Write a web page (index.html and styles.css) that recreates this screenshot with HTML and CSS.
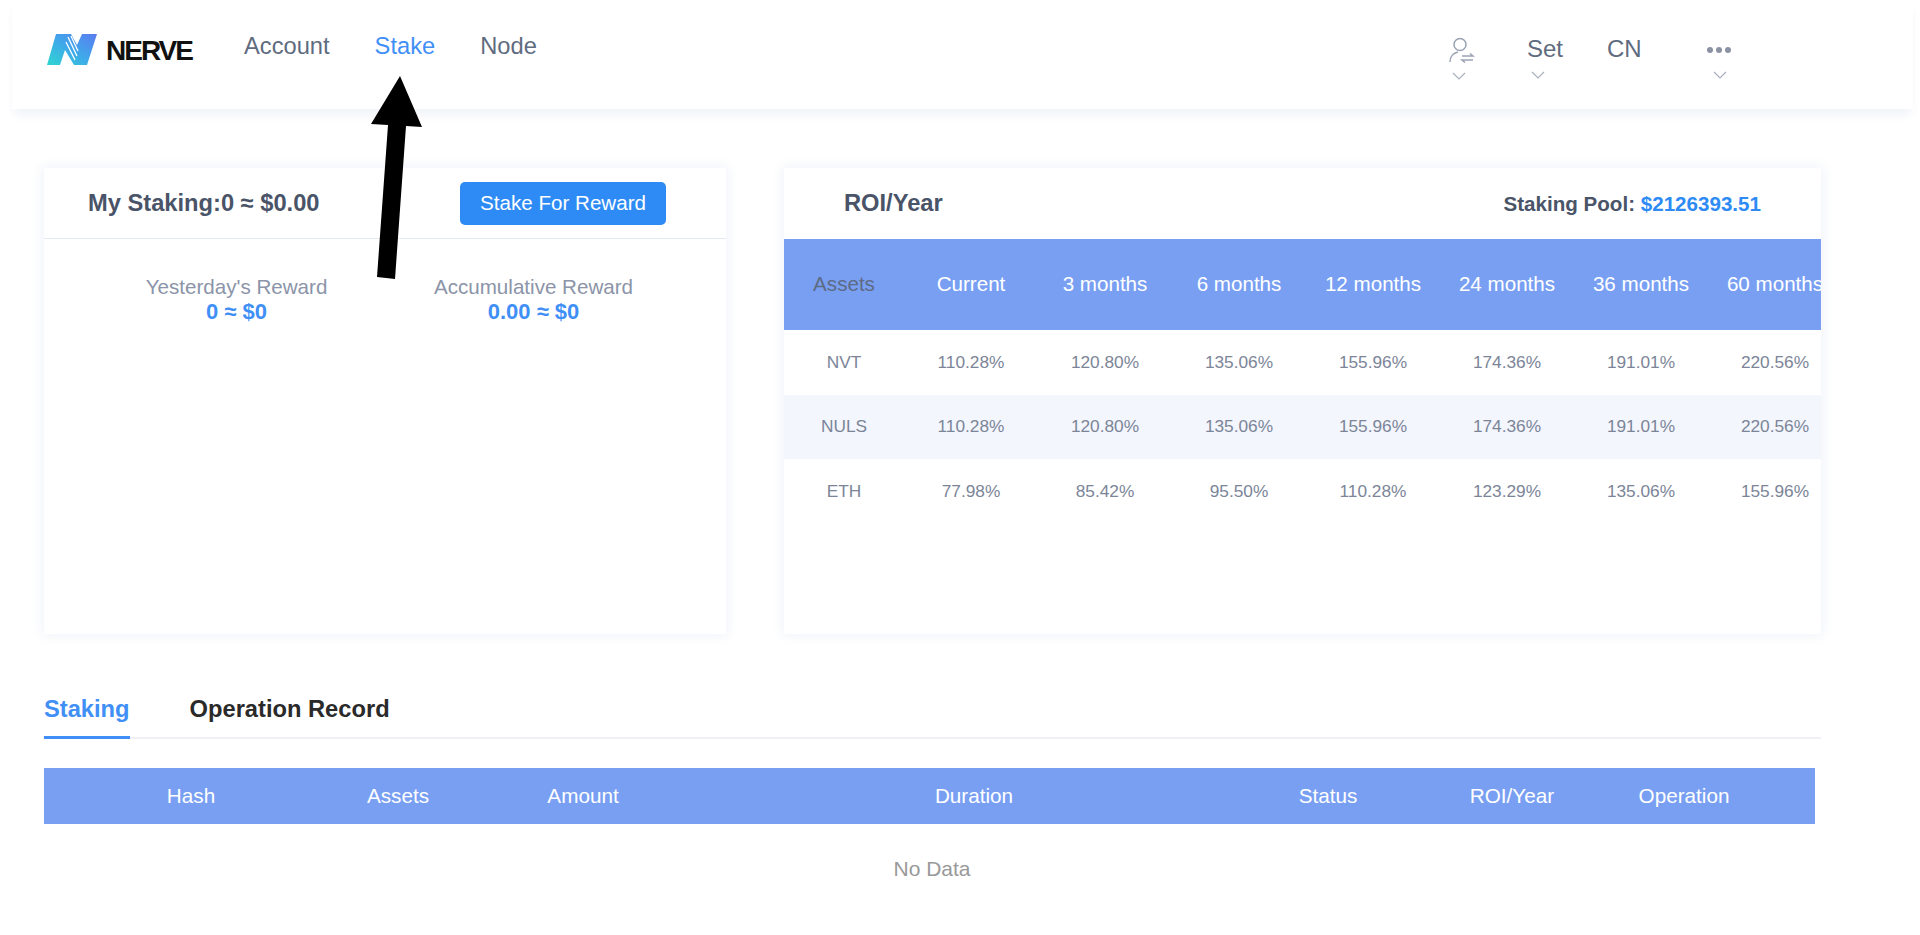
FILE: index.html
```html
<!DOCTYPE html>
<html lang="en">
<head>
    <meta charset="utf-8">
    <meta name="viewport" content="width=device-width, initial-scale=1.0">
    <title>Nerve Stake</title>
    <link rel="stylesheet" href="styles.css">
</head>
<body>
    <div id="page">
        <header class="topbar">
            <a class="logo">
                <svg class="logo-mark" viewBox="0 0 50 31" width="50" height="31">
                    <defs>
                        <linearGradient id="logoGrad" x1="0" y1="1" x2="1" y2="0">
                            <stop offset="0" stop-color="#2fd6d0"/>
                            <stop offset="0.5" stop-color="#3fa8ea"/>
                            <stop offset="1" stop-color="#5b7cf0"/>
                        </linearGradient>
                    </defs>
                    <polygon points="9,0 24,0 30,11 35,0 50,0 40,31 27,31 18,16 13,31 0,31" fill="url(#logoGrad)"/>
                    <path d="M24 2l7 15M21 3l9 19M19 8l9 18" stroke="#fff" stroke-width="1.3" fill="none"/>
                </svg>
                <span class="logo-text">NERVE</span>
            </a>
            <nav class="nav">
                <a>Account</a>
                <a class="active">Stake</a>
                <a>Node</a>
            </nav>
            <div class="tools">
                <div class="tool tool-user">
                    <svg class="user-icon" viewBox="0 0 26 26" width="26" height="26" fill="none" stroke="#9aa3b4" stroke-width="1.5">
                        <circle cx="11" cy="7.5" r="6"/>
                        <path d="M1 25c0-5 3-9 8-10"/>
                        <path d="M13 19h11l-3-2.5M24 23H13l3 2.5"/>
                    </svg>
                    <svg class="chev" viewBox="0 0 14 8" width="14" height="8"><path d="M1 1l6 6 6-6"/></svg>
                </div>
                <div class="tool tool-set">
                    <span>Set</span>
                    <svg class="chev" viewBox="0 0 14 8" width="14" height="8"><path d="M1 1l6 6 6-6"/></svg>
                </div>
                <div class="tool tool-lang"><span>CN</span></div>
                <div class="tool tool-more">
                    <span class="dots"><i></i><i></i><i></i></span>
                    <svg class="chev" viewBox="0 0 14 8" width="14" height="8"><path d="M1 1l6 6 6-6"/></svg>
                </div>
            </div>
        </header>

        <main class="content">
            <div class="cards">
                <section class="card card-mine">
                    <div class="card-head">
                        <h2>My Staking:0 ≈ $0.00</h2>
                        <button class="btn">Stake For Reward</button>
                    </div>
                    <div class="stats">
                        <div class="stat">
                            <p>Yesterday's Reward</p>
                            <b>0 ≈ $0</b>
                        </div>
                        <div class="stat">
                            <p>Accumulative Reward</p>
                            <b>0.00 ≈ $0</b>
                        </div>
                    </div>
                </section>

                <section class="card card-roi">
                    <div class="card-head roi-head">
                        <h2>ROI/Year</h2>
                        <div class="pool">Staking Pool: <b>$2126393.51</b></div>
                    </div>
                    <div class="roi-row roi-title">
                        <span class="dark">Assets</span><span>Current</span><span>3 months</span><span>6 months</span><span>12 months</span><span>24 months</span><span>36 months</span><span>60 months</span>
                    </div>
                    <div class="roi-row">
                        <span>NVT</span><span>110.28%</span><span>120.80%</span><span>135.06%</span><span>155.96%</span><span>174.36%</span><span>191.01%</span><span>220.56%</span>
                    </div>
                    <div class="roi-row striped">
                        <span>NULS</span><span>110.28%</span><span>120.80%</span><span>135.06%</span><span>155.96%</span><span>174.36%</span><span>191.01%</span><span>220.56%</span>
                    </div>
                    <div class="roi-row">
                        <span>ETH</span><span>77.98%</span><span>85.42%</span><span>95.50%</span><span>110.28%</span><span>123.29%</span><span>135.06%</span><span>155.96%</span>
                    </div>
                </section>
            </div>

            <div class="tabs">
                <a class="tab active">Staking</a>
                <a class="tab">Operation Record</a>
            </div>

            <div class="list-head">
                <span>Hash</span><span>Assets</span><span>Amount</span><span>Duration</span><span>Status</span><span>ROI/Year</span><span>Operation</span>
            </div>
            <div class="no-data">No Data</div>
        </main>

        <svg class="arrow" viewBox="0 0 60 210" width="60" height="210">
            <polygon points="32,1 54,52 38,51 27,204 9,202 20,50 3,49"/>
        </svg>
    </div>
</body>
</html>
```

FILE: styles.css
```css
* {
    box-sizing: border-box;
}
html, body {
    margin: 0;
    height: 100%;
    overflow: hidden;
}
body {
    font-family: "Liberation Sans", Arial, sans-serif;
    color: #5b6679;
    background: #fff;
}
#page {
    position: relative;
    height: 935px;
}
h2, p {
    margin: 0;
}

/* top bar */
.topbar {
    display: flex;
    height: 109px;
    margin: 0 7px 0 12px;
    padding: 0 0 0 35px;
    background: #fff;
    box-shadow: 0 8px 10px -2px #f1f3f9;
}
.logo {
    display: flex;
    align-items: flex-start;
    padding-top: 34px;
    width: 197px;
}
.logo-text {
    margin: 1px 0 0 9px;
    font-size: 28px;
    font-weight: bold;
    letter-spacing: -2px;
    color: #111;
}
.nav {
    display: flex;
    gap: 45px;
    padding-top: 32px;
    font-size: 23.7px;
    line-height: 28px;
    color: #5f6b7f;
}
.nav .active {
    color: #3f8ff7;
}
.tools {
    position: relative;
    display: flex;
    margin-left: auto;
    margin-right: 182px;
    padding-top: 35px;
    font-size: 24px;
    line-height: 27px;
    color: #5f6b7f;
}
.tool {
    display: flex;
    flex-direction: column;
    align-items: flex-start;
}
.tool-user {
    width: 78px;
    padding-top: 2px;
}
.tool-set {
    width: 80px;
}
.tool-lang {
    width: 100px;
}
.chev {
    fill: none;
    stroke: #a9b0bd;
    stroke-width: 1.2;
}
.tool-user .chev {
    margin: 9px 0 0 3px;
}
.tool-set .chev {
    margin: 9px 0 0 4px;
}
.tool-more .chev {
    margin: 21px 0 0 6px;
}
.dots {
    display: flex;
    gap: 3px;
    padding-top: 12px;
    height: 15px;
}
.dots i {
    width: 6px;
    height: 6px;
    border-radius: 50%;
    background: #8a92a3;
}

/* cards */
.content {
    padding: 59px 99px 0 44px;
}
.cards {
    display: flex;
    gap: 58px;
    height: 466px;
}
.card {
    background: #fff;
    box-shadow: 0 0 12px 2px #f1f3f9;
    overflow: hidden;
}
.card-mine {
    width: 682px;
}
.card-roi {
    width: 1037px;
}
.card-head {
    display: flex;
    align-items: center;
    justify-content: space-between;
    height: 71px;
    padding: 0 60px 0 44px;
    border-bottom: 1px solid #e6ebf3;
}
.card-head h2 {
    font-size: 23.7px;
    color: #4a5468;
}
.btn {
    width: 206px;
    height: 43px;
    border: 0;
    border-radius: 5px;
    font-family: inherit;
    font-size: 20.6px;
    color: #fff;
    background: #2e8bf5;
}
.stats {
    display: grid;
    grid-template-columns: 1fr 1fr;
    padding: 35px 44px 0;
    text-align: center;
}
.stat p {
    font-size: 20.6px;
    line-height: 25px;
    color: #8b94a8;
}
.stat b {
    display: block;
    font-size: 22px;
    line-height: 25px;
    color: #3f8ff7;
}

/* roi table */
.roi-head {
    padding: 0 60px 0 60px;
    border-bottom: 0;
}
.pool {
    font-size: 20.6px;
    font-weight: bold;
    color: #4a5468;
}
.pool b {
    color: #2e8bf5;
}
.roi-row {
    display: grid;
    grid-template-columns: 120px repeat(7, 134px);
    align-items: center;
    height: 64.5px;
    font-size: 17.3px;
    text-align: center;
    color: #7c8598;
    white-space: nowrap;
}
.roi-title {
    height: 91px;
    padding-bottom: 2px;
    font-size: 20.6px;
    color: #fff;
    background: #799ff3;
}
.roi-title .dark {
    color: #5d6b85;
}
.striped {
    background: #f3f6fd;
}

/* tabs and list */
.tabs {
    display: flex;
    gap: 60px;
    height: 71px;
    margin-top: 34px;
    border-bottom: 2px solid #f0f1f6;
}
.tab {
    height: 71px;
    padding-top: 27px;
    font-size: 23.7px;
    line-height: 28px;
    font-weight: bold;
    color: #2a2a2a;
}
.tab.active {
    color: #3f8ff7;
    border-bottom: 3px solid #3f8ff7;
}
.list-head {
    display: grid;
    grid-template-columns: 294px 120px 250px 532px 176px 192px 152px;
    align-items: center;
    width: 1771px;
    height: 56px;
    margin-top: 29px;
    font-size: 20.7px;
    text-align: center;
    color: #fff;
    background: #799ff3;
}
.no-data {
    width: 1776px;
    margin-top: 32px;
    font-size: 21px;
    line-height: 26px;
    text-align: center;
    color: #999;
}

/* annotation drawn over the page */
.arrow {
    position: absolute;
    left: 368px;
    top: 75px;
    fill: #000;
}
```
